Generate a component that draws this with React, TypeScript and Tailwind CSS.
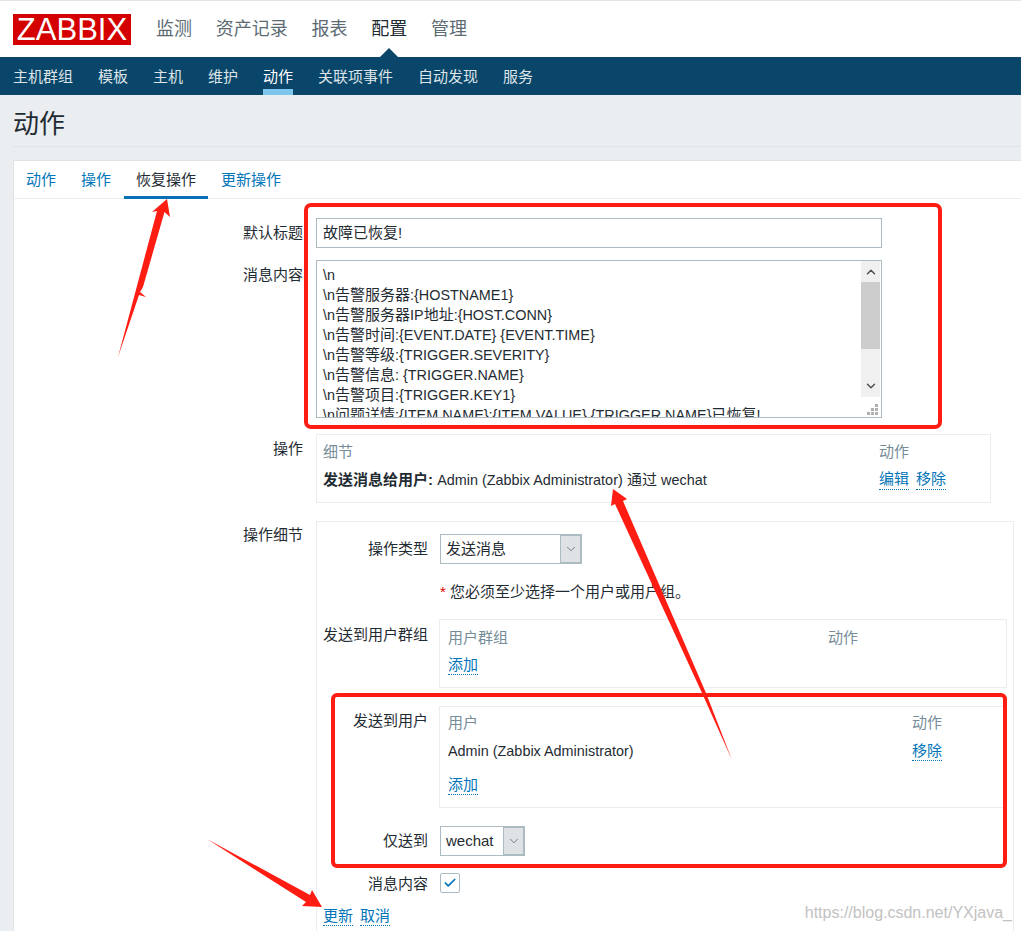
import { Check, ChevronDown, ChevronUp } from "lucide-react";
import type { ReactNode } from "react";

const topMenu = ["监测", "资产记录", "报表", "配置", "管理"];
const subMenu = ["主机群组", "模板", "主机", "维护", "动作", "关联项事件", "自动发现", "服务"];
const tabs = ["动作", "操作", "恢复操作", "更新操作"];
const messageLines = [
  "\\n",
  "\\n告警服务器:{HOSTNAME1}",
  "\\n告警服务器IP地址:{HOST.CONN}",
  "\\n告警时间:{EVENT.DATE} {EVENT.TIME}",
  "\\n告警等级:{TRIGGER.SEVERITY}",
  "\\n告警信息: {TRIGGER.NAME}",
  "\\n告警项目:{TRIGGER.KEY1}",
  "\\n问题详情:{ITEM.NAME}:{ITEM.VALUE} {TRIGGER.NAME}已恢复!",
];

// latin runs are a bit narrower than the cjk ones in the screenshot
function Mixed({ text }: { text: string }) {
  const parts = text.split(/([\u4e00-\u9fff]+)/);
  return (
    <>
      {parts.map((p, i) =>
        i % 2 === 1 ? <span key={i}>{p}</span> : <span key={i} className="text-[14.4px]">{p}</span>
      )}
    </>
  );
}

function Link({ children }: { children: ReactNode }) {
  return <a className="text-[#0275b8] border-b border-dotted border-[#0275b8] leading-[18px] inline-block">{children}</a>;
}

function Select({ text, width }: { text: string; width: string }) {
  return (
    <div className={`flex h-[30px] border border-[#acbbc2] bg-white ${width}`}>
      <span className="flex-1 pl-[5px] leading-[28px]">{text}</span>
      <span className="w-[21px] flex items-center justify-center bg-[#dee2e4] border border-[#acbbc2]">
        <ChevronDown size={14} strokeWidth={1} className="text-[#333]" />
      </span>
    </div>
  );
}

function InnerRow({ label, className, labelClass, children }: { label: string; className?: string; labelClass?: string; children: ReactNode }) {
  return (
    <div className={`flex gap-3 ${className ?? ""}`}>
      <div className={`w-[106px] shrink-0 text-right ${labelClass ?? ""}`}>{label}</div>
      <div className="flex-1">{children}</div>
    </div>
  );
}

function Annotations() {
  return (
    <svg className="absolute left-0 top-0 pointer-events-none" width="1021" height="931" viewBox="0 0 1021 931">
      <rect x="306" y="205" width="634" height="222" rx="5" fill="none" stroke="#ff1d13" strokeWidth="4" />
      <rect x="333" y="695" width="672" height="171" rx="4" fill="none" stroke="#ff1d13" strokeWidth="4" />
      <polygon fill="#ff1d13" points="167,199 170,217 164.5,212 143,287 140,292 146,297 139,295 118,357 157,211 152,212" />
      <polygon fill="#ff1d13" points="613,489 627,499 623,501 706,693 732,760 702,693 615,504 611,506" />
      <polygon fill="#ff1d13" points="207,839 310,895 312,890 322,907 302,906 306,902" />
    </svg>
  );
}

export default function App() {
  return (
    <div className="relative w-[1021px] h-[931px] overflow-hidden bg-[#ebeef0] text-[15px] leading-5 text-[#1f2c33] font-['Liberation_Sans','Noto_Sans_CJK_SC',sans-serif]">
      <header className="relative h-[57px] bg-white border-t border-[#e4e4e4] flex items-center pl-[13px]">
        <div className="w-[118px] h-[31px] bg-[#d40000] text-white text-[31px] leading-[31px] text-center">ZABBIX</div>
        <nav className="flex gap-[23.75px] ml-[25px] text-[18px]">
          {topMenu.map((m) => (
            <span key={m} className={m === "配置" ? "text-[#1f2c33]" : "text-[#5c6b73]"}>{m}</span>
          ))}
        </nav>
        <div className="absolute left-[380px] bottom-0 w-0 h-0 border-x-[9px] border-x-transparent border-b-[9px] border-b-[#0a466a]" />
      </header>
      <nav className="h-[38px] bg-[#0a466a] flex gap-[25px] px-[13px]">
        {subMenu.map((m) => (
          <span
            key={m}
            className={
              m === "动作"
                ? "h-[38px] pt-[10px] text-white border-b-[6px] border-[#7fc6ee]"
                : "h-[38px] pt-[10px] text-[#dde4e8]"
            }
          >
            {m}
          </span>
        ))}
      </nav>
      <div className="pl-[13px]">
        <h1 className="h-[52px] border-b border-[#dfe4e7] text-[26px] leading-[59px] text-[#1f2c33]">动作</h1>
        <div className="mt-[13px] w-[1040px] bg-white border border-[#dfe4e7]">
          <div className="flex h-[38px] gap-[1px] border-b border-[#ebeef0]">
            {tabs.map((t) => (
              <span
                key={t}
                className={
                  t === "恢复操作"
                    ? "h-[38px] px-3 pt-[9px] text-[#1f2c33] border-b-[3px] border-[#0a70b5]"
                    : "h-[38px] px-3 pt-[9px] text-[#0275b8]"
                }
              >
                {t}
              </span>
            ))}
          </div>

          <div className="flex pt-[19px]">
            <div className="w-[289px] text-right pt-[5px]">默认标题</div>
            <div className="ml-[13px] w-[566px] h-[30px] border border-[#acbbc2] pl-[6px] leading-[28px]">故障已恢复!</div>
          </div>

          <div className="flex pt-[12px]">
            <div className="w-[289px] text-right pt-[5px]">消息内容</div>
            <div className="ml-[13px] w-[566px] h-[158px] border border-[#acbbc2] flex">
              <div className="flex-1 overflow-hidden pl-[6px] pt-[4px]">
                {messageLines.map((l) => (
                  <div key={l} className="whitespace-nowrap"><Mixed text={l} /></div>
                ))}
              </div>
              <div className="w-[20px] pr-[1px] flex flex-col">
                <div className="h-[136px] bg-[#f0f0f0] flex flex-col">
                  <div className="h-[21px] flex items-center justify-center"><ChevronUp size={14} strokeWidth={2.5} className="text-[#505050]" /></div>
                  <div className="h-[67px] bg-[#cdcdcd]" />
                  <div className="flex-1 flex items-end justify-center pb-[4px]"><ChevronDown size={14} strokeWidth={2.5} className="text-[#505050]" /></div>
                </div>
                <div className="flex-1 flex items-end justify-end pr-[2px] pb-[2px]">
                  <svg width="11" height="11" viewBox="0 0 11 11" fill="#b0b0b0">
                    <rect x="8" y="0" width="3" height="3" />
                    <rect x="4" y="4" width="3" height="3" />
                    <rect x="8" y="4" width="3" height="3" />
                    <rect x="0" y="8" width="3" height="3" />
                    <rect x="4" y="8" width="3" height="3" />
                    <rect x="8" y="8" width="3" height="3" />
                  </svg>
                </div>
              </div>
            </div>
          </div>

          <div className="flex pt-[16px]">
            <div className="w-[289px] text-right pt-[5px]">操作</div>
            <div className="ml-[13px] w-[675px] h-[69px] border border-[#ebeef0] pl-[6px] pt-[7px]">
              <div className="flex text-[#768d99]">
                <span className="w-[556px]">细节</span>
                <span>动作</span>
              </div>
              <div className="flex mt-[8px]">
                <span className="w-[556px]"><b className="font-bold">发送消息给用户:</b> <span className="text-[14.4px]">Admin (Zabbix Administrator)</span> 通过 <span className="text-[14.4px]">wechat</span></span>
                <span className="flex gap-[7px]"><Link>编辑</Link><Link>移除</Link></span>
              </div>
            </div>
          </div>

          <div className="flex pt-[18px]">
            <div className="w-[289px] text-right pt-[4px]">操作细节</div>
            <div className="ml-[13px] w-[698px] border border-[#ebeef0] pl-[5px] pt-[12px] pb-[20px]">
              <InnerRow label="操作类型" className="leading-[30px]">
                <Select text="发送消息" width="w-[142px]" />
              </InnerRow>
              <InnerRow label="" className="mt-[18px]">
                <span><span className="text-[#dc0000]">*</span> 您必须至少选择一个用户或用户组。</span>
              </InnerRow>
              <InnerRow label="发送到用户群组" labelClass="pt-[6px]" className="mt-[17px]">
                <div className="-ml-px w-[568px] h-[69px] border border-[#ebeef0] pl-[8px] pt-[8px]">
                  <div className="flex text-[#768d99]">
                    <span className="w-[380px]">用户群组</span>
                    <span>动作</span>
                  </div>
                  <div className="mt-[7px]"><Link>添加</Link></div>
                </div>
              </InnerRow>
              <InnerRow label="发送到用户" labelClass="pt-[5px]" className="mt-[18px]">
                <div className="-ml-px w-[568px] h-[102px] border border-[#ebeef0] pl-[8px] pt-[6px]">
                  <div className="flex text-[#768d99]">
                    <span className="w-[464px]">用户</span>
                    <span>动作</span>
                  </div>
                  <div className="flex items-end mt-[8px]">
                    <span className="w-[464px] text-[14.4px]">Admin (Zabbix Administrator)</span>
                    <Link>移除</Link>
                  </div>
                  <div className="mt-[14px]"><Link>添加</Link></div>
                </div>
              </InnerRow>
              <InnerRow label="仅送到" className="mt-[18px] leading-[30px]">
                <Select text="wechat" width="w-[85px]" />
              </InnerRow>
              <InnerRow label="消息内容" className="mt-[17px] leading-[22px]">
                <div className="w-5 h-5 border border-[#acbbc2] rounded-[2px] flex items-center justify-center">
                  <Check size={14} strokeWidth={3} className="text-[#0275b8]" />
                </div>
              </InnerRow>
              <div className="flex gap-[7px] mt-[12px] pl-[1px]"><Link>更新</Link><Link>取消</Link></div>
            </div>
          </div>
        </div>
      </div>
      <Annotations />
      <div className="absolute right-[9px] top-[903px] text-[16px] text-[#c2c2c2]">https://blog.csdn.net/YXjava_</div>
    </div>
  );
}
